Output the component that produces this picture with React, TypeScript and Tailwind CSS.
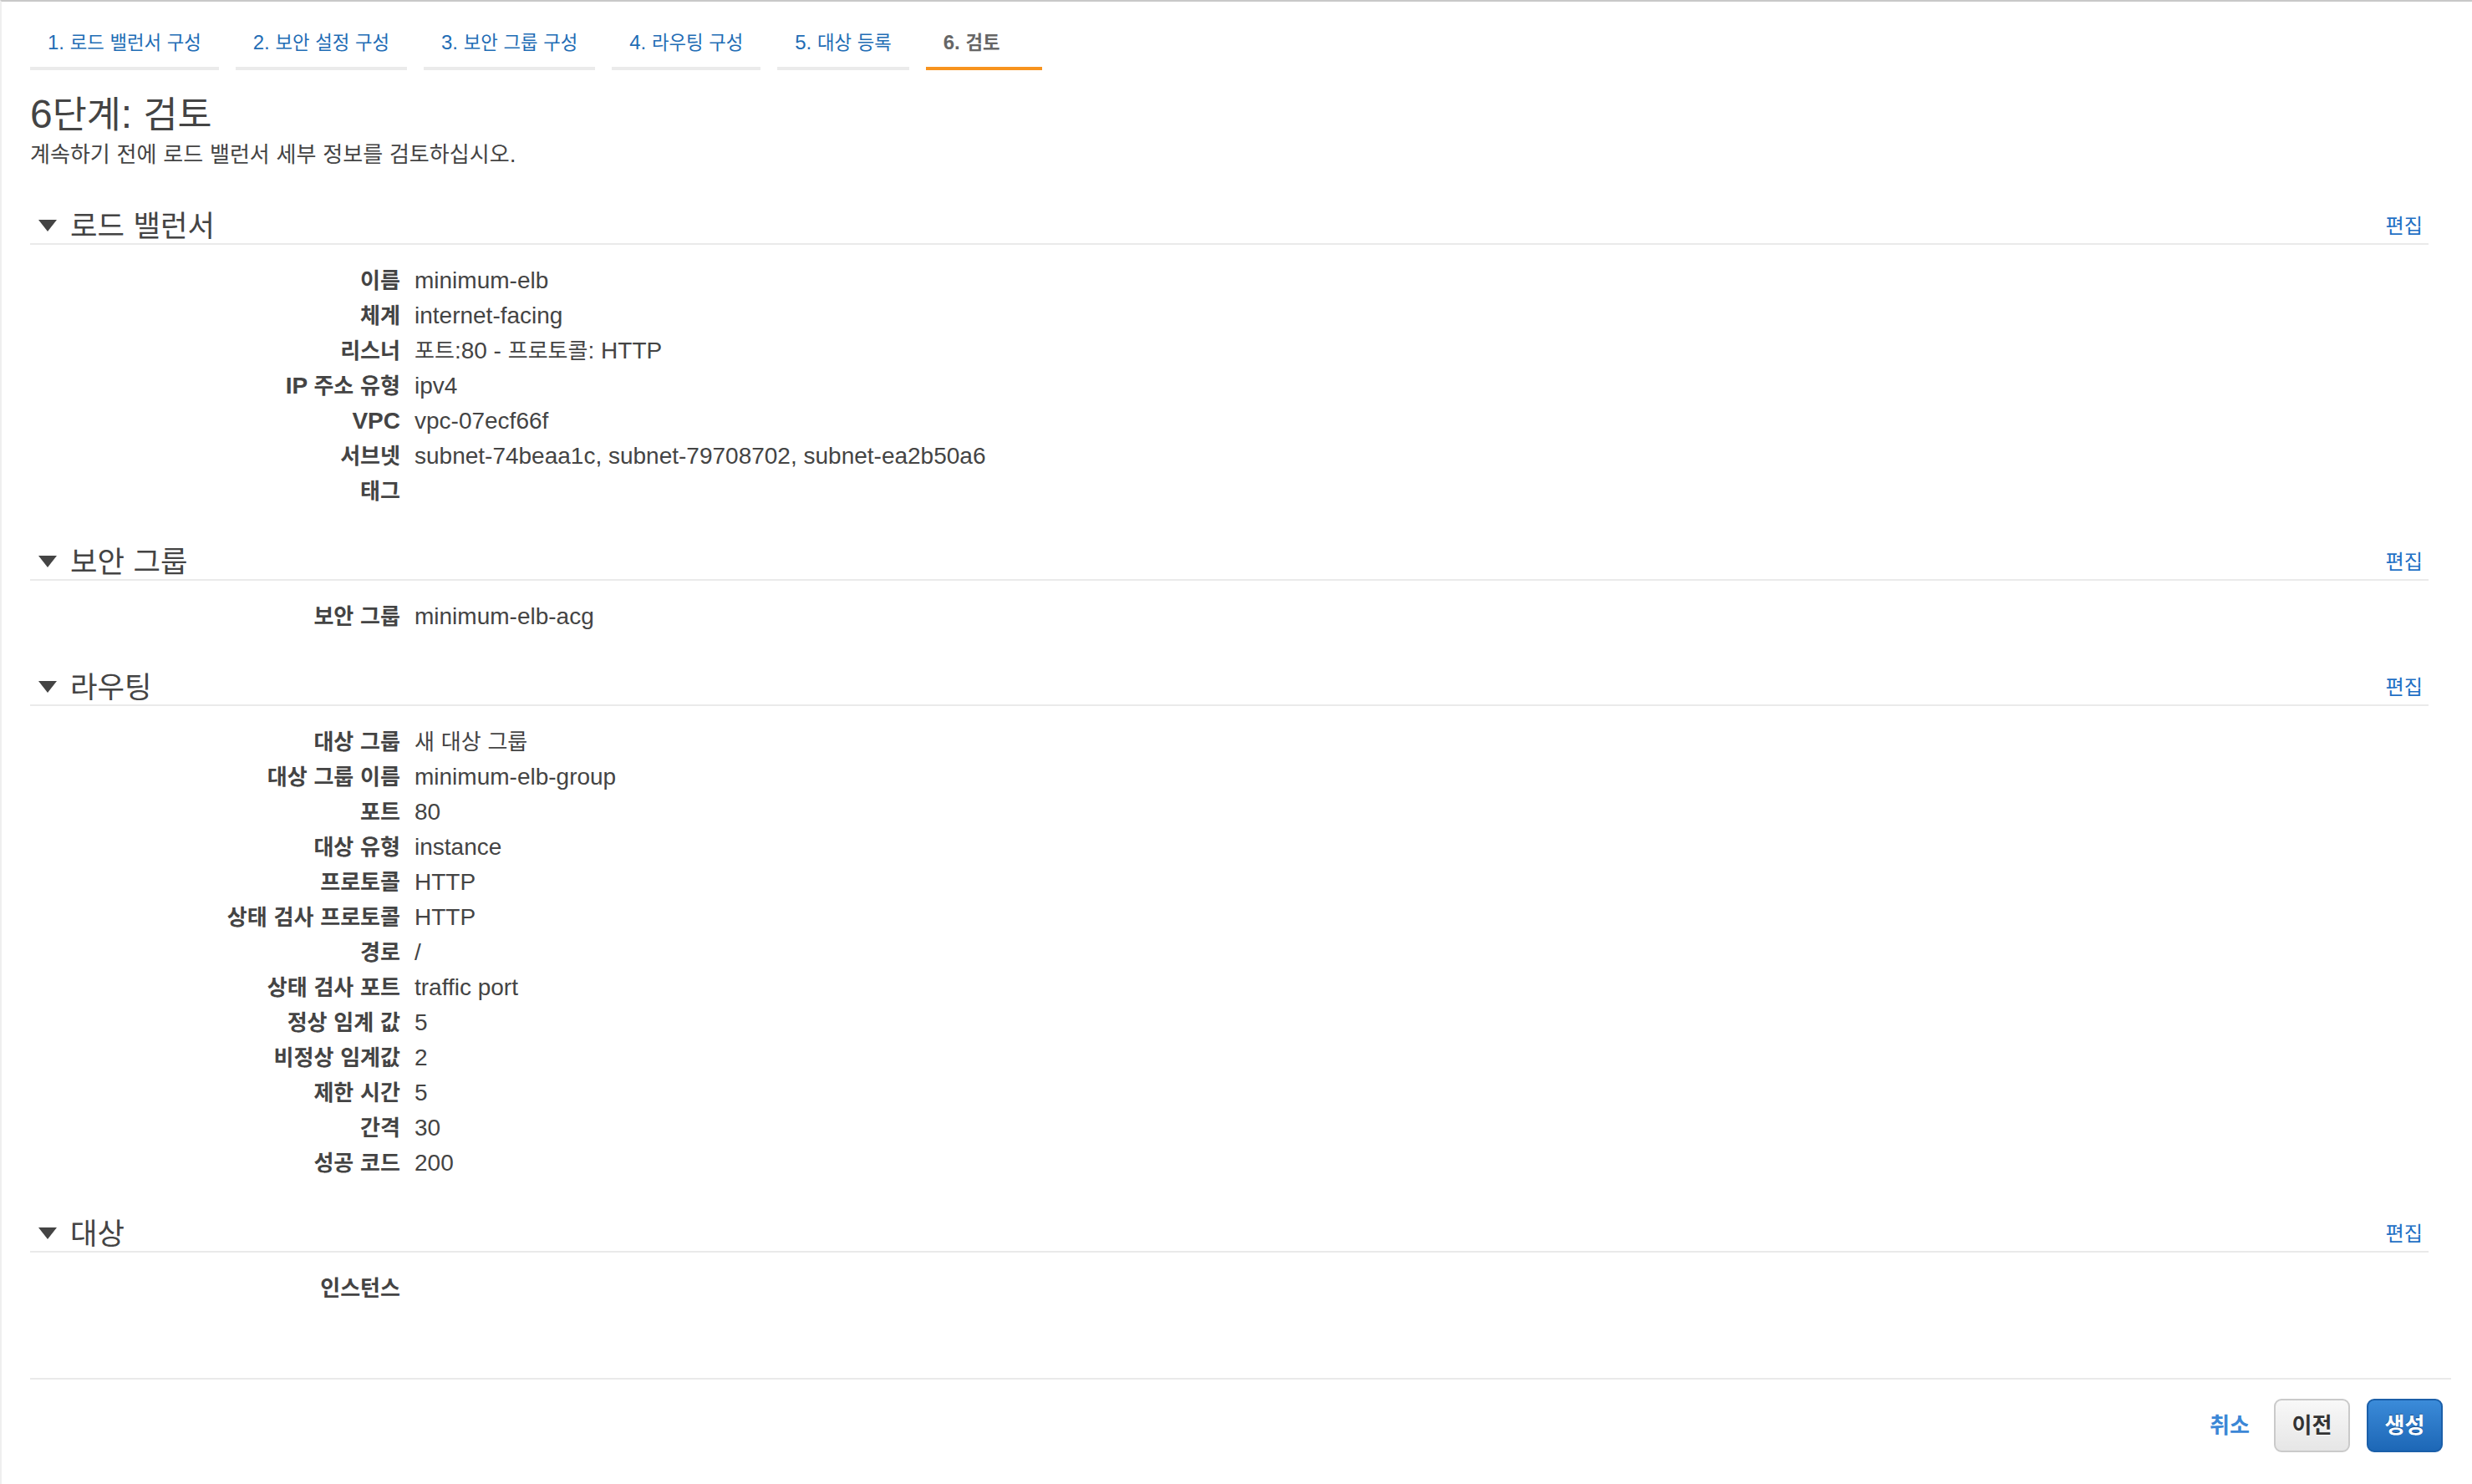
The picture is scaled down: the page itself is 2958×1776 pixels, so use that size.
import React from "react";

// Korean glyphs in the reference are narrower than Noto's full-width Hangul,
// so Hangul runs are rendered a touch smaller than the Latin text around them.
function K({ children }: { children: string }) {
  const parts = children.split(/([\uac00-\ud7a3]+)/);
  return (
    <>
      {parts.map((p, i) =>
        /[\uac00-\ud7a3]/.test(p) ? (
          <span key={i} className="text-[0.93em] leading-none">
            {p}
          </span>
        ) : (
          <React.Fragment key={i}>{p}</React.Fragment>
        )
      )}
    </>
  );
}

const tabs = [
  "1. 로드 밸런서 구성",
  "2. 보안 설정 구성",
  "3. 보안 그룹 구성",
  "4. 라우팅 구성",
  "5. 대상 등록",
  "6. 검토",
];

type Row = [string, string];

const sections: { title: string; rows: Row[] }[] = [
  {
    title: "로드 밸런서",
    rows: [
      ["이름", "minimum-elb"],
      ["체계", "internet-facing"],
      ["리스너", "포트:80 - 프로토콜: HTTP"],
      ["IP 주소 유형", "ipv4"],
      ["VPC", "vpc-07ecf66f"],
      ["서브넷", "subnet-74beaa1c, subnet-79708702, subnet-ea2b50a6"],
      ["태그", ""],
    ],
  },
  {
    title: "보안 그룹",
    rows: [["보안 그룹", "minimum-elb-acg"]],
  },
  {
    title: "라우팅",
    rows: [
      ["대상 그룹", "새 대상 그룹"],
      ["대상 그룹 이름", "minimum-elb-group"],
      ["포트", "80"],
      ["대상 유형", "instance"],
      ["프로토콜", "HTTP"],
      ["상태 검사 프로토콜", "HTTP"],
      ["경로", "/"],
      ["상태 검사 포트", "traffic port"],
      ["정상 임계 값", "5"],
      ["비정상 임계값", "2"],
      ["제한 시간", "5"],
      ["간격", "30"],
      ["성공 코드", "200"],
    ],
  },
  {
    title: "대상",
    rows: [["인스턴스", ""]],
  },
];

function Section({ title, rows, first }: { title: string; rows: Row[]; first?: boolean }) {
  return (
    <section className={`mr-[27px] ${first ? "mt-[47px]" : "mt-[42px]"}`}>
      <div className="flex h-[44px] items-center justify-between border-b-2 border-[#eaeaea]">
        <div className="flex items-center">
          <svg width="22" height="14" viewBox="0 0 22 14" className="ml-[10px]">
            <polygon points="0,0 22,0 11,14" fill="#444" />
          </svg>
          <h2 className="ml-[16px] text-[38px] leading-[44px] text-[#444]">
            <K>{title}</K>
          </h2>
        </div>
        <a className="pr-[7px] text-[26px] leading-[44px] text-[#1f6fc4]">
          <K>편집</K>
        </a>
      </div>
      <dl className="grid grid-cols-[443px_1fr] gap-x-[17px] pt-[22px] text-[28px] leading-[42px] text-[#444]">
        {rows.map(([label, value], i) => (
          <React.Fragment key={i}>
            <dt className="h-[42px] text-right font-bold">
              <K>{label}</K>
            </dt>
            <dd className="h-[42px]">
              <K>{value}</K>
            </dd>
          </React.Fragment>
        ))}
      </dl>
    </section>
  );
}

export default function App() {
  return (
    <div
      className="min-h-screen border-t-2 border-l-2 border-[#c8c8c8] border-l-[#efefef] bg-white pl-[34px] pr-[25px] text-[#444]"
      style={{ fontFamily: '"Liberation Sans", "Noto Sans CJK KR", sans-serif' }}
    >
      {/* Wizard steps */}
      <nav className="flex gap-[20px] pt-[33px]">
        {tabs.map((t, i) => {
          const active = i === tabs.length - 1;
          return (
            <div
              key={t}
              className={`h-[49px] border-b-4 px-[21px] pb-[13px] text-[24px] leading-[32px] ${
                active
                  ? "w-[139px] border-[#f7931e] font-bold text-[#666]"
                  : "border-[#ebebeb] text-[#1f6db5]"
              }`}
            >
              <K>{t}</K>
            </div>
          );
        })}
      </nav>

      <h1 className="mt-[25px] h-[56px] text-[48px] leading-[56px] text-[#444]">
        <K>6단계: 검토</K>
      </h1>
      <p className="mt-[3px] h-[34px] text-[28px] leading-[34px] text-[#444]">
        <K>계속하기 전에 로드 밸런서 세부 정보를 검토하십시오.</K>
      </p>

      {sections.map((s, i) => (
        <Section key={s.title} title={s.title} rows={s.rows} first={i === 0} />
      ))}

      {/* Footer actions */}
      <div className="mt-[86px] border-t-2 border-[#eaeaea] pt-[23px]">
        <div className="flex items-center justify-end pr-[10px]">
          <a className="text-[28px] font-bold text-[#3b87d6]">
            <K>취소</K>
          </a>
          <button className="ml-[29px] h-[64px] w-[91px] rounded-[9px] border-2 border-[#cacaca] bg-gradient-to-b from-[#f8f8f8] to-[#e6e6e6] text-[28px] font-bold text-[#333] [text-shadow:0_1px_0_#fff]">
            <K>이전</K>
          </button>
          <button className="ml-[20px] h-[64px] w-[91px] rounded-[9px] border-2 border-[#1b5fa9] bg-gradient-to-b from-[#3b8bd9] to-[#1d67b6] text-[28px] font-bold text-white [text-shadow:0_-1px_0_#1a4f8a]">
            <K>생성</K>
          </button>
        </div>
      </div>
    </div>
  );
}
